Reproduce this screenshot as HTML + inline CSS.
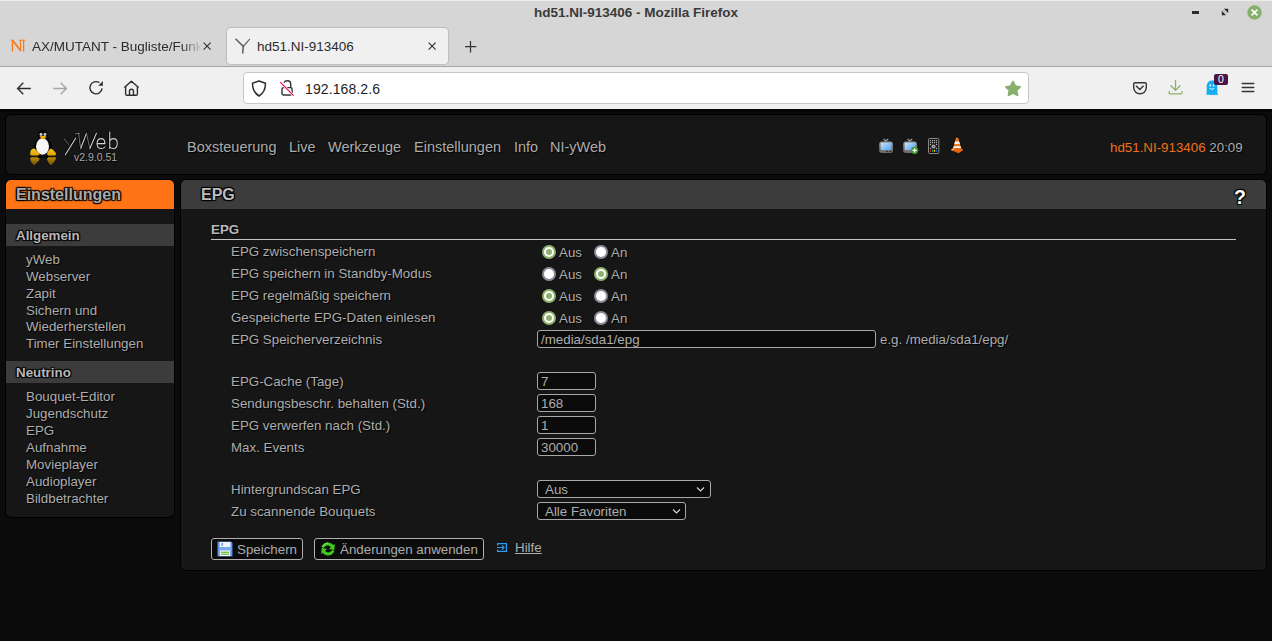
<!DOCTYPE html>
<html><head><meta charset="utf-8">
<style>
*{box-sizing:border-box;margin:0;padding:0}
html,body{width:1272px;height:641px;overflow:hidden;background:#0b0b0b;font-family:"Liberation Sans",sans-serif}
.abs{position:absolute}
/* browser chrome */
#titlebar{left:0;top:0;width:1272px;height:28px;background:#d6d6d6}
#title{left:0;top:5px;width:1272px;text-align:center;font-size:13.5px;font-weight:bold;color:#3a3a3a}
#tabbar{left:0;top:28px;width:1272px;height:38px;background:#d6d6d6}
#navbar{left:0;top:67px;width:1272px;height:42px;background:#f0f0f0}
#page{left:0;top:109px;width:1272px;height:532px;background:#0b0b0b}
.box{background:#161616;border-radius:5px;box-shadow:0 0 0 1px #000}
.tabtxt{font-size:13.5px;color:#2c2c2c}
.sh{text-shadow:1px 1px 1px #000}
.shb{text-shadow:1px 1px 1px #000,-1px -1px 1px #000,1px -1px 1px #000,-1px 1px 1px #000}
.nav{font-size:14.5px;line-height:17px;color:#acacac;white-space:nowrap}
.lb{font-size:13.33px;line-height:17px;color:#adadad;white-space:nowrap}
.sb{font-size:13.33px;line-height:17px;color:#adadad;white-space:nowrap;text-shadow:1px 1px 1px #000}
.rad{width:14px;height:14px;border-radius:50%;background:#fff;border:2px solid #8e8c9a}
.rad.on{border-color:#8db270;background:radial-gradient(circle,#8db270 0,#8db270 3px,#fff 3.5px)}
.inp{background:#0b0b0b;border:1px solid #a8a8a8;border-radius:3px;font-size:13.33px;line-height:16px;color:#adadad;padding-left:3px;padding-top:1px;white-space:nowrap}
.sel{padding-left:7px}
.btn{background:#0b0b0b;border:1px solid #b0b0b0;border-radius:3px}
.txt{color:#b9b9b9;font-size:13px}
</style></head><body>
<div id="titlebar" class="abs"></div>
<div class="abs" style="left:0;top:0;width:1272px;height:1px;background:#ececec"></div>
<div id="title" class="abs">hd51.NI-913406 - Mozilla Firefox</div>
<!-- window controls -->
<div class="abs" style="left:1192px;top:11px;width:7px;height:3px;background:#2c2c2c"></div>
<svg class="abs" style="left:1221px;top:8px" width="8" height="8" viewBox="0 0 8 8"><path d="M2.8 0.8 L7.2 0.8 L7.2 5 Z M0.8 2.8 L0.8 7.2 L5 7.2 Z" fill="#2a2a2a"/><path d="M2 2 L6 6" stroke="#555" stroke-width="0.6" stroke-dasharray="1 1"/></svg>
<svg class="abs" style="left:1247px;top:5px" width="15" height="15" viewBox="0 0 15 15"><circle cx="7.5" cy="7.5" r="7.2" fill="#87b16a"/><path d="M4.6 4.6 L10.4 10.4 M10.4 4.6 L4.6 10.4" stroke="#fff" stroke-width="1.7"/></svg>
<div id="tabbar" class="abs"></div>
<!-- inactive tab -->
<svg class="abs" style="left:4px;top:34px" width="24" height="20" viewBox="0 0 24 20"><g stroke="#f97a1c" fill="none"><path d="M8.4 6 V17.6" stroke-width="1.3"/><path d="M8.8 6.5 L16.9 17" stroke-width="1.9"/><path d="M16.5 6 V17" stroke-width="1.1"/><path d="M19.6 6 V17.6" stroke-width="1.3"/><path d="M6.9 6.2 H10 M15 6.2 H21.2" stroke-width="0.9"/></g></svg>
<div class="abs tabtxt" style="left:32px;top:39px;width:170px;overflow:hidden;white-space:nowrap;-webkit-mask-image:linear-gradient(90deg,#000 150px,transparent 170px)">AX/MUTANT - Bugliste/Funktionen</div>
<svg class="abs" style="left:203px;top:42px" width="9" height="9" viewBox="0 0 9 9"><path d="M0.6 0.6 L7.6 7.6 M7.6 0.6 L0.6 7.6" stroke="#333" stroke-width="1.15"/></svg>
<!-- active tab -->
<div class="abs" style="left:227px;top:28px;width:221px;height:36px;background:#f0f0f0;border-radius:4px;box-shadow:0 0 1px 1px rgba(0,0,0,0.12)"></div>
<svg class="abs" style="left:235px;top:38px" width="16" height="17" viewBox="0 0 16 17"><g stroke="#646464" fill="none" stroke-linecap="round"><path d="M1 1.2 L8.3 8.4" stroke-width="1.6"/><path d="M14.5 1.3 L8.6 8" stroke-width="1.2"/><path d="M8.3 8.4 L7.7 15" stroke-width="1.6"/></g></svg>
<div class="abs tabtxt" style="left:257px;top:39px">hd51.NI-913406</div>
<svg class="abs" style="left:428px;top:42px" width="9" height="9" viewBox="0 0 9 9"><path d="M0.6 0.6 L7.6 7.6 M7.6 0.6 L0.6 7.6" stroke="#333" stroke-width="1.15"/></svg>
<svg class="abs" style="left:464px;top:40px" width="13" height="13" viewBox="0 0 13 13"><path d="M6.5 1 V12.5 M1 6.5 H12.3" stroke="#333" stroke-width="1.25"/></svg>
<div class="abs" style="left:0;top:66px;width:1272px;height:1px;background:#a4a4a4"></div>
<div id="navbar" class="abs"></div>
<!-- nav icons -->
<svg class="abs" style="left:16px;top:81px" width="16" height="15" viewBox="0 0 16 15"><path d="M14.8 7.5 H1.8 M7.3 1.8 L1.6 7.5 L7.3 13.2" stroke="#2e2e2e" stroke-width="1.4" fill="none"/></svg>
<svg class="abs" style="left:52px;top:81px" width="16" height="15" viewBox="0 0 16 15"><path d="M1.2 7.5 H14.2 M8.7 1.8 L14.4 7.5 L8.7 13.2" stroke="#a6a6a6" stroke-width="1.4" fill="none"/></svg>
<svg class="abs" style="left:88px;top:80px" width="16" height="16" viewBox="0 0 16 16"><path d="M11.3 2.6 A6.1 6.1 0 1 0 14.1 8.4" stroke="#2e2e2e" stroke-width="1.4" fill="none"/><path d="M10.2 5.7 L14.9 5.7 L14.9 1 Z" fill="#2e2e2e"/></svg>
<svg class="abs" style="left:123px;top:80px" width="17" height="17" viewBox="0 0 17 17"><path d="M1.3 7.6 L8.4 1.2 L15.6 7.6 M2.6 6.5 V14 A1.3 1.3 0 0 0 3.9 15.3 H13.1 A1.3 1.3 0 0 0 14.4 14 V6.5 M6.5 15.3 V11.2 A2 2 0 0 1 10.5 11.2 V15.3" stroke="#2e2e2e" stroke-width="1.4" fill="none" stroke-linejoin="round"/></svg>
<!-- url bar -->
<div class="abs" style="left:243px;top:72px;width:786px;height:32px;background:#fff;border:1px solid #c8c8c8;border-radius:4px"></div>
<svg class="abs" style="left:251px;top:80px" width="16" height="17" viewBox="0 0 16 17"><path d="M8 1 L14.5 3.2 C14.5 9 13 13 8 16 C3 13 1.5 9 1.5 3.2 Z" stroke="#2e2e2e" stroke-width="1.5" fill="none" stroke-linejoin="round"/></svg>
<svg class="abs" style="left:279px;top:79px" width="17" height="18" viewBox="0 0 17 18"><path d="M5 3.6 C5.6 2.4 6.8 1.8 8.3 1.8 C10.3 1.8 11.7 3.3 11.7 5.3 V8.4" stroke="#333" stroke-width="1.4" fill="none"/><rect x="3" y="8.6" width="10.1" height="7.4" rx="1.4" stroke="#333" stroke-width="1.4" fill="none"/><path d="M1.2 3.1 L14.6 16.6" stroke="#fff" stroke-width="2.6"/><path d="M1.2 3.1 L14.6 16.6" stroke="#e8174f" stroke-width="1.3"/></svg>
<div class="abs" style="left:305px;top:81px;font-size:14px;color:#1e1e1e;letter-spacing:0.1px">192.168.2.6</div>
<svg class="abs" style="left:1004px;top:80px" width="18" height="17" viewBox="0 0 18 17"><path d="M9 1.8 L11.2 6.3 L16 6.9 L12.5 10.3 L13.4 15.1 L9 12.8 L4.6 15.1 L5.5 10.3 L2 6.9 L6.8 6.3 Z" fill="#89af6d" stroke="#89af6d" stroke-width="2" stroke-linejoin="round"/></svg>
<svg class="abs" style="left:1132px;top:81px" width="16" height="15" viewBox="0 0 16 15"><path d="M3 1.7 H13 A1.3 1.3 0 0 1 14.3 3 V6.5 A6.3 6.2 0 0 1 1.7 6.5 V3 A1.3 1.3 0 0 1 3 1.7 Z" stroke="#333" stroke-width="1.4" fill="none"/><path d="M4 4.8 L7.8 8.6 L11.6 4.8" stroke="#333" stroke-width="1.4" fill="none"/></svg>
<svg class="abs" style="left:1168px;top:80px" width="15" height="16" viewBox="0 0 15 16"><path d="M7.5 0.5 V10.3 M3 5.8 L7.5 10.4 L12 5.8" stroke="#89b06c" stroke-width="1.3" fill="none" stroke-linecap="round"/><path d="M1.2 11.3 V12.7 A1.2 1.2 0 0 0 2.4 13.9 H12.8 A1.2 1.2 0 0 0 14 12.7 V11.3" stroke="#89b06c" stroke-width="1.3" fill="none" stroke-linecap="round"/></svg>
<svg class="abs" style="left:1205px;top:80px" width="14" height="16" viewBox="0 0 14 16"><path d="M7 0.6 C10.3 0.6 12.3 3.2 12.3 6.8 V12.5 C12.3 13.6 13 14.3 13.2 14.8 C12.2 15.4 11.3 14.8 10.6 14.5 C9.8 15.4 8.6 15.5 7.8 14.6 C7 15.5 5.8 15.4 5 14.6 C4.2 15.2 3 15.3 2 14.6 C1.8 14.6 0.8 14.9 0.8 14.7 C1.4 13.8 1.7 13 1.7 12 V6.8 C1.7 3.2 3.7 0.6 7 0.6 Z" fill="#12aef2"/><ellipse cx="5.2" cy="5.4" rx="0.75" ry="1.2" fill="#fff"/><ellipse cx="8.6" cy="5.4" rx="0.75" ry="1.2" fill="#fff"/><path d="M4.6 8.4 Q6.9 10.4 9.2 8.4" stroke="#fff" stroke-width="0.9" fill="none"/></svg>
<div class="abs" style="left:1214px;top:74px;width:14px;height:11px;background:#4a1444;border-radius:2px;color:#fff;font-size:10.5px;text-align:center;line-height:11px">0</div>
<svg class="abs" style="left:1241px;top:82px" width="14" height="12" viewBox="0 0 14 12"><path d="M1.2 1.5 H12.8 M1.2 5.5 H12.8 M1.2 9.5 H12.8" stroke="#333" stroke-width="1.3" stroke-linecap="round"/></svg>
<div id="page" class="abs"></div>
<div class="abs" style="left:0;top:109px;width:1272px;height:3px;background:#050505"></div>

<!-- header -->
<div class="abs box" style="left:6px;top:115px;width:1260px;height:59px"></div>
<!-- penguin -->
<svg class="abs" style="left:24px;top:126px" width="38" height="42" viewBox="0 0 38 42">
 <defs><linearGradient id="ft" x1="0" y1="0" x2="0" y2="1"><stop offset="0" stop-color="#f7c21a"/><stop offset="1" stop-color="#e0a000"/></linearGradient>
 <linearGradient id="rf" x1="0" y1="0" x2="0" y2="1"><stop offset="0" stop-color="#d9a100"/><stop offset="1" stop-color="#7a5a00"/></linearGradient></defs>
 <path d="M19 3.2 C15.3 3.2 14.4 6 14.4 9 C14.4 11.5 13 13.5 11.5 16 C10 18.5 9 21.5 9.3 24.5 C9.5 26.5 10 27.5 10.5 28 L27.5 28 C28 27.5 28.5 26.5 28.7 24.5 C29 21.5 28 18.5 26.5 16 C25 13.5 23.6 11.5 23.6 9 C23.6 6 22.7 3.2 19 3.2 Z" fill="#060606"/>
 <ellipse cx="18.5" cy="20.5" rx="6.5" ry="8.2" fill="#f6f6f6"/>
 <ellipse cx="17" cy="8.3" rx="1.4" ry="1.6" fill="#c8c8c8"/><ellipse cx="21" cy="8.3" rx="1.4" ry="1.6" fill="#c8c8c8"/>
 <path d="M15.5 10.5 Q19 8.8 22.5 10.5 Q21 13 19 13 Q17 13 15.5 10.5 Z" fill="#f2b000"/>
 <path d="M6.5 26 C6 24.5 8 23 10 22.3 C11.5 23.5 13.5 25.5 15.5 27.2 C15.8 28.5 15 29.6 13.5 29.6 L7.5 29.6 C6 29.2 5.8 27.5 6.5 26 Z" fill="url(#ft)"/>
 <path d="M31.5 26.5 C32.5 27.5 32 29 31 29.6 L25 29.6 C23.5 29.6 22.8 28.5 23.2 27 C24 25 25.5 23.5 27 22.5 C28.5 23.5 30.5 25 31.5 26.5 Z" fill="url(#ft)"/>
 <path d="M6.5 33.5 C6 35 8 37.5 10 39.3 C11.5 38 13.5 36 15.5 34 C15.8 32.7 15 31.2 13.5 31.2 L7.5 31.2 C6 31.6 5.8 32.5 6.5 33.5 Z" fill="url(#rf)" opacity="0.85"/>
 <path d="M31.5 33.5 C32.5 32.5 32 31.5 31 31.2 L25 31.2 C23.5 31.2 22.8 32.5 23.2 34 C24 36 25.5 38 27 39.3 C28.5 38 30.5 36 31.5 33.5 Z" fill="url(#rf)" opacity="0.85"/>
 <rect x="14" y="29.5" width="10" height="2.5" fill="#040404"/>
</svg>
<svg class="abs" style="left:60px;top:126px" width="62" height="30" viewBox="0 0 62 30">
 <g fill="none" stroke-linecap="round" stroke-linejoin="round">
 <g stroke="#000" stroke-width="1.3" transform="translate(-0.7,-0.2)">
  <path d="M15.6 12.3 L5.3 28.7"/>
  <path d="M20.6 22.5 L26.4 7.4 M29.8 22.5 L36.4 7.3"/>
  <path d="M37.2 17.6 H44.9 C44.9 14.3 43.4 12.6 41.2 12.6 C38.6 12.6 37 14.8 37 17.7 C37 20.8 38.8 22.5 41.3 22.5 C42.8 22.5 44 21.9 44.8 21"/>
  <path d="M49.7 5.9 V22.4 M49.7 14.8 C50.6 13.3 51.9 12.6 53.3 12.6 C55.8 12.6 57.2 14.6 57.2 17.5 C57.2 20.5 55.7 22.5 53.2 22.5 C51.7 22.5 50.5 21.8 49.7 20.7"/>
  <path d="M4 12.8 L8.5 18.5"/>
  <path d="M18.5 7.4 L20.6 22.5 M26.4 7.4 L29.8 22.5 M15.5 7.5 L19.5 7.4"/>
 </g>
 <g stroke="#d4d4d4" stroke-width="1.05">
  <path d="M15.6 12.3 L5.3 28.7"/>
  <path d="M20.6 22.5 L26.4 7.4 M29.8 22.5 L36.4 7.3"/>
  <path d="M37.2 17.6 H44.9 C44.9 14.3 43.4 12.6 41.2 12.6 C38.6 12.6 37 14.8 37 17.7 C37 20.8 38.8 22.5 41.3 22.5 C42.8 22.5 44 21.9 44.8 21"/>
  <path d="M49.7 5.9 V22.4 M49.7 14.8 C50.6 13.3 51.9 12.6 53.3 12.6 C55.8 12.6 57.2 14.6 57.2 17.5 C57.2 20.5 55.7 22.5 53.2 22.5 C51.7 22.5 50.5 21.8 49.7 20.7"/>
 </g>
 <g stroke="#7a7a7a" stroke-width="0.9">
  <path d="M4 12.8 L8.5 18.5"/>
  <path d="M18.5 7.4 L20.6 22.5 M26.4 7.4 L29.8 22.5 M15.5 7.5 L19.5 7.4"/>
 </g></g>
</svg>
<div class="abs sh" style="left:74px;top:151px;font-size:10.5px;line-height:12px;color:#a8a8a8">v2.9.0.51</div>
<!-- nav -->
<div class="abs sh nav" style="left:187px;top:139px">Boxsteuerung</div>
<div class="abs sh nav" style="left:289px;top:139px">Live</div>
<div class="abs sh nav" style="left:328px;top:139px">Werkzeuge</div>
<div class="abs sh nav" style="left:414px;top:139px">Einstellungen</div>
<div class="abs sh nav" style="left:514px;top:139px">Info</div>
<div class="abs sh nav" style="left:550px;top:139px">NI-yWeb</div>
<!-- header icons -->
<svg class="abs" style="left:879px;top:138px" width="15" height="16" viewBox="0 0 15 16">
 <defs><linearGradient id="scr" x1="0" y1="0" x2="1" y2="1"><stop offset="0" stop-color="#c6e4fd"/><stop offset="0.5" stop-color="#8cc4f6"/><stop offset="1" stop-color="#5aa6f0"/></linearGradient>
 <linearGradient id="tvb" x1="0" y1="0" x2="0" y2="1"><stop offset="0" stop-color="#9a9a9a"/><stop offset="1" stop-color="#6a6a6a"/></linearGradient></defs>
 <path d="M4.5 1 L6.8 3 L9.2 1" stroke="#9c9c9c" stroke-width="1.3" fill="none"/>
 <rect x="0.2" y="3.6" width="13.7" height="11.3" rx="2.6" fill="url(#tvb)"/>
 <rect x="1.8" y="4.7" width="10.4" height="7.2" rx="0.8" fill="url(#scr)"/>
 <rect x="7" y="13" width="2" height="1" fill="#2a2a2a"/><rect x="10.2" y="13" width="2" height="1" fill="#2a2a2a"/>
</svg>
<svg class="abs" style="left:903px;top:138px" width="16" height="17" viewBox="0 0 16 17">
 <path d="M4.5 1 L6.8 3 L9.2 1" stroke="#9c9c9c" stroke-width="1.3" fill="none"/>
 <rect x="0.2" y="3.6" width="13.7" height="11.3" rx="2.6" fill="url(#tvb)"/>
 <rect x="1.8" y="4.7" width="10.4" height="7.2" rx="0.8" fill="url(#scr)"/>
 <circle cx="11.6" cy="12.3" r="3.6" fill="#3f9a2e"/><path d="M11.6 10.2 V14.4 M9.5 12.3 H13.7" stroke="#fff" stroke-width="1.3"/>
</svg>
<svg class="abs" style="left:928px;top:138px" width="12" height="16" viewBox="0 0 12 16">
 <rect x="0.5" y="0.5" width="10.3" height="15" rx="1" fill="#141414" stroke="#8a8a8a" stroke-width="1"/>
 <g fill="#b4b4b4"><rect x="1.9" y="2" width="1.2" height="1.2"/><rect x="3.9" y="2" width="1.2" height="1.2"/><rect x="5.9" y="2" width="1.2" height="1.2"/><rect x="7.9" y="2" width="1.2" height="1.2"/>
 <rect x="1.9" y="4" width="1.2" height="1.2"/><rect x="3.9" y="4" width="1.2" height="1.2"/><rect x="5.9" y="4" width="1.2" height="1.2"/><rect x="7.9" y="4" width="1.2" height="1.2"/>
 <rect x="1.9" y="6" width="1.2" height="1.2"/><rect x="7.9" y="6" width="1.2" height="1.2"/><rect x="1.9" y="9.8" width="1.2" height="1.2"/><rect x="7.9" y="9.8" width="1.2" height="1.2"/></g>
 <circle cx="5.5" cy="8.5" r="2.1" fill="#a0a0a0"/><circle cx="5.5" cy="8.5" r="0.6" fill="#555"/>
 <rect x="1.9" y="11.8" width="1.2" height="2" fill="#e02010"/><rect x="3.9" y="11.8" width="1.2" height="2" fill="#22b022"/><rect x="5.9" y="11.8" width="1.2" height="2" fill="#f0e020"/><rect x="7.9" y="11.8" width="1.2" height="2" fill="#2060e0"/>
</svg>
<svg class="abs" style="left:950px;top:137px" width="14" height="17" viewBox="0 0 14 17">
 <path d="M6 0.8 L8.2 0.8 L11.5 12.5 L2.8 12.5 Z" fill="#f07a1a"/>
 <path d="M5.1 4.5 L9.2 4.5 L9.9 7 L4.4 7 Z M3.8 9.3 L10.6 9.3 L11.2 11.5 L3.2 11.5 Z" fill="#f4f4f4"/>
 <path d="M0.8 13 L3.5 11 L10.8 11 L13.3 13 L8.5 16.3 Z" fill="#e8650e"/>
 <path d="M0.8 13 L3.5 11 L5 11 L2.5 13.5 Z" fill="#f8b080"/>
</svg>
<div class="abs" style="left:1110px;top:140px;font-size:13.33px;line-height:15px;white-space:nowrap"><span style="color:#f0701a">hd51.NI-913406</span> <span class="sh" style="color:#ababab">20:09</span></div>

<!-- sidebar -->
<div class="abs box" style="left:6px;top:180px;width:168px;height:337px"></div>
<div class="abs" style="left:6px;top:180px;width:168px;height:29px;background:#fd7316;border-radius:5px 5px 0 0"></div>
<div class="abs shb" style="left:16px;top:185px;font-size:16px;line-height:20px;font-weight:bold;color:#aaaaaa">Einstellungen</div>
<div class="abs" style="left:6px;top:224px;width:168px;height:22px;background:#3c3c3c"></div>
<div class="abs shb" style="left:16px;top:228px;font-size:13.33px;line-height:16px;font-weight:bold;color:#b8b8b8">Allgemein</div>
<div class="abs sb" style="left:26px;top:251px">yWeb<br>Webserver<br>Zapit<br>Sichern und</div><div class="abs sb" style="left:26px;top:318px">Wiederherstellen<br>Timer Einstellungen</div>
<div class="abs" style="left:6px;top:361px;width:168px;height:22px;background:#3c3c3c"></div>
<div class="abs shb" style="left:16px;top:365px;font-size:13.33px;line-height:16px;font-weight:bold;color:#b8b8b8">Neutrino</div>
<div class="abs sb" style="left:26px;top:388px">Bouquet-Editor<br>Jugendschutz<br>EPG<br>Aufnahme<br>Movieplayer<br>Audioplayer<br>Bildbetrachter</div>

<!-- main -->
<div class="abs box" style="left:181px;top:180px;width:1085px;height:390px"></div>
<div class="abs" style="left:181px;top:180px;width:1085px;height:29px;background:#3c3c3c;border-radius:5px 5px 0 0"></div>
<div class="abs shb" style="left:201px;top:185px;font-size:16px;line-height:20px;font-weight:bold;color:#bcbcbc">EPG</div>
<div class="abs shb" style="left:1234px;top:186px;font-size:19.5px;line-height:22px;font-weight:bold;color:#fff">?</div>
<div class="abs sh" style="left:211px;top:222px;font-size:13.33px;line-height:16px;font-weight:bold;color:#b8b8b8">EPG</div>
<div class="abs" style="left:211px;top:239px;width:1025px;height:1px;background:#c4c4c4"></div>
<div class="abs sh lb" style="left:231px;top:243px">EPG zwischenspeichern</div>
<div class="abs sh lb" style="left:231px;top:265px">EPG speichern in Standby-Modus</div>
<div class="abs sh lb" style="left:231px;top:287px">EPG regelmäßig speichern</div>
<div class="abs sh lb" style="left:231px;top:309px">Gespeicherte EPG-Daten einlesen</div>
<div class="abs sh lb" style="left:231px;top:331px">EPG Speicherverzeichnis</div>
<div class="abs sh lb" style="left:231px;top:373px">EPG-Cache (Tage)</div>
<div class="abs sh lb" style="left:231px;top:395px">Sendungsbeschr. behalten (Std.)</div>
<div class="abs sh lb" style="left:231px;top:417px">EPG verwerfen nach (Std.)</div>
<div class="abs sh lb" style="left:231px;top:439px">Max. Events</div>
<div class="abs sh lb" style="left:231px;top:481px">Hintergrundscan EPG</div>
<div class="abs sh lb" style="left:231px;top:503px">Zu scannende Bouquets</div>
<svg class="abs" style="left:542px;top:245px" width="14" height="14" viewBox="0 0 14 14"><circle cx="7" cy="7" r="6" fill="#fff" stroke="#8db270" stroke-width="2"/><circle cx="7" cy="7" r="3" fill="#8db270"/></svg>
<div class="abs sh lb" style="left:559px;top:244px">Aus</div>
<svg class="abs" style="left:594px;top:245px" width="14" height="14" viewBox="0 0 14 14"><circle cx="7" cy="7" r="6" fill="#fff" stroke="#8e8c9a" stroke-width="2"/></svg>
<div class="abs sh lb" style="left:611px;top:244px">An</div>
<svg class="abs" style="left:542px;top:267px" width="14" height="14" viewBox="0 0 14 14"><circle cx="7" cy="7" r="6" fill="#fff" stroke="#8e8c9a" stroke-width="2"/></svg>
<div class="abs sh lb" style="left:559px;top:266px">Aus</div>
<svg class="abs" style="left:594px;top:267px" width="14" height="14" viewBox="0 0 14 14"><circle cx="7" cy="7" r="6" fill="#fff" stroke="#8db270" stroke-width="2"/><circle cx="7" cy="7" r="3" fill="#8db270"/></svg>
<div class="abs sh lb" style="left:611px;top:266px">An</div>
<svg class="abs" style="left:542px;top:289px" width="14" height="14" viewBox="0 0 14 14"><circle cx="7" cy="7" r="6" fill="#fff" stroke="#8db270" stroke-width="2"/><circle cx="7" cy="7" r="3" fill="#8db270"/></svg>
<div class="abs sh lb" style="left:559px;top:288px">Aus</div>
<svg class="abs" style="left:594px;top:289px" width="14" height="14" viewBox="0 0 14 14"><circle cx="7" cy="7" r="6" fill="#fff" stroke="#8e8c9a" stroke-width="2"/></svg>
<div class="abs sh lb" style="left:611px;top:288px">An</div>
<svg class="abs" style="left:542px;top:311px" width="14" height="14" viewBox="0 0 14 14"><circle cx="7" cy="7" r="6" fill="#fff" stroke="#8db270" stroke-width="2"/><circle cx="7" cy="7" r="3" fill="#8db270"/></svg>
<div class="abs sh lb" style="left:559px;top:310px">Aus</div>
<svg class="abs" style="left:594px;top:311px" width="14" height="14" viewBox="0 0 14 14"><circle cx="7" cy="7" r="6" fill="#fff" stroke="#8e8c9a" stroke-width="2"/></svg>
<div class="abs sh lb" style="left:611px;top:310px">An</div>
<div class="abs inp" style="left:537px;top:330px;width:339px;height:18px">/media/sda1/epg</div>
<div class="abs sh lb" style="left:880px;top:331px">e.g. /media/sda1/epg/</div>
<div class="abs inp" style="left:537px;top:372px;width:59px;height:18px">7</div>
<div class="abs inp" style="left:537px;top:394px;width:59px;height:18px">168</div>
<div class="abs inp" style="left:537px;top:416px;width:59px;height:18px">1</div>
<div class="abs inp" style="left:537px;top:438px;width:59px;height:18px">30000</div>
<div class="abs inp sel" style="left:537px;top:480px;width:174px;height:18px">Aus</div>
<svg class="abs" style="left:696px;top:486px" width="9" height="7" viewBox="0 0 9 7"><path d="M1 1.5 L4.5 5 L8 1.5" stroke="#d8d8d8" stroke-width="1.1" fill="none"/></svg>
<div class="abs inp sel" style="left:537px;top:502px;width:149px;height:18px">Alle Favoriten</div>
<svg class="abs" style="left:672px;top:508px" width="9" height="7" viewBox="0 0 9 7"><path d="M1 1.5 L4.5 5 L8 1.5" stroke="#d8d8d8" stroke-width="1.1" fill="none"/></svg>
<div class="abs btn" style="left:211px;top:538px;width:92px;height:22px"></div>
<svg class="abs" style="left:217px;top:541px" width="16" height="16" viewBox="0 0 16 16">
 <path d="M0.5 0.5 H14 L15.5 2 V15.5 H0.5 Z" fill="#4d86dc"/>
 <rect x="1.5" y="1" width="13" height="14" fill="#7aa6ea"/>
 <rect x="2.8" y="1" width="10.5" height="5" fill="#eef3fb"/><rect x="4.5" y="2" width="1.2" height="3" fill="#4d7fd0"/>
 <rect x="3" y="9.5" width="10" height="5.5" fill="#fbfbfb"/><rect x="3.8" y="10.6" width="8.4" height="1.4" fill="#74c04a"/><rect x="3.8" y="12.6" width="8.4" height="1.4" fill="#74c04a"/>
</svg>
<div class="abs lb" style="left:237px;top:541px;color:#acacac">Speichern</div>
<div class="abs btn" style="left:314px;top:538px;width:170px;height:22px"></div>
<svg class="abs" style="left:320px;top:541px" width="16" height="16" viewBox="0 0 16 16">
 <path d="M1.5 6 C3 2.5 6 1.2 8.5 1.5 C11 1.8 12.5 3 13.2 4.2 L14.8 2.8 L14.3 9 L8.8 8 L10.8 6.5 C10 5 8.8 4.5 7.5 4.6 C5.5 4.8 4.2 6 3.8 7 Z" fill="#3fcc1c"/>
 <path d="M14.5 10 C13 13.5 10 14.8 7.5 14.5 C5 14.2 3.5 13 2.8 11.8 L1.2 13.2 L1.7 7 L7.2 8 L5.2 9.5 C6 11 7.2 11.5 8.5 11.4 C10.5 11.2 11.8 10 12.2 9 Z" fill="#3fcc1c"/>
 <path d="M2.5 5.5 C4 3 6 2 8 2" stroke="#b8f0a0" stroke-width="0.7" fill="none"/>
</svg>
<div class="abs lb" style="left:340px;top:541px;color:#acacac">Änderungen anwenden</div>
<svg class="abs" style="left:496px;top:542px" width="12" height="11" viewBox="0 0 12 11"><path d="M1.6 3.6 V1.6 H10.4 V9.4 H1.6 V7.4" stroke="#2a9cf2" stroke-width="1.3" fill="none"/><path d="M1 5.5 H8 M6 3.4 L8.1 5.5 L6 7.6" stroke="#2a9cf2" stroke-width="1.2" fill="none"/></svg>
<div class="abs lb" style="left:515px;top:539px;text-decoration:underline;color:#acacac">Hilfe</div>
</body></html>
